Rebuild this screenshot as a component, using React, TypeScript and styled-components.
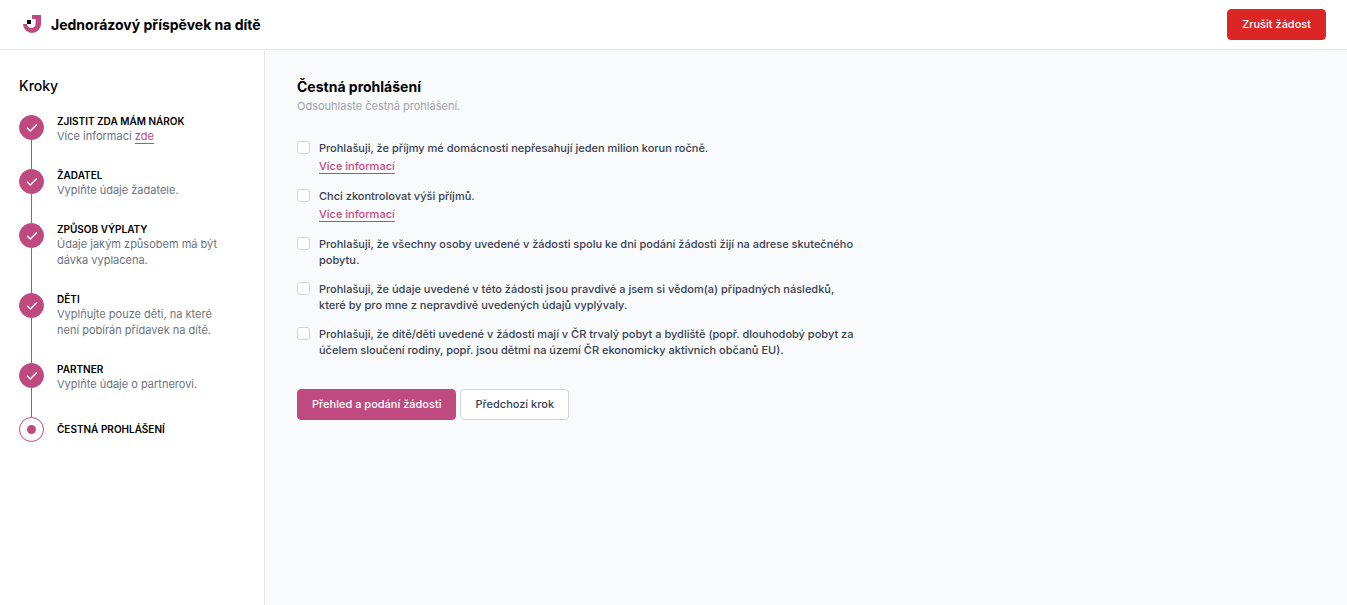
import React from "react";
import styled, { createGlobalStyle, css } from "styled-components";

const colors = {
  brand: "#be4a7f",
  danger: "#dc2626",
  border: "#e5e7eb",
  inputBorder: "#d1d5db",
  canvas: "#f9fafc",
  text: "#374151",
  muted: "#6b7280",
  faint: "#9ca3af",
};

const GlobalStyle = createGlobalStyle`
  *, *::before, *::after { box-sizing: border-box; }
  body {
    margin: 0;
    background: ${colors.canvas};
    color: #000;
    font-family: Inter, "Liberation Sans", sans-serif;
    font-size: 11px;
    line-height: 16px;
  }
  h1, h2, h3, p, ol, ul { margin: 0; padding: 0; }
  ol, ul { list-style: none; }
`;

const Page = styled.div`
  display: flex;
  flex-direction: column;
  min-height: 100vh;
`;

const Header = styled.header`
  display: flex;
  align-items: center;
  justify-content: space-between;
  height: 50px;
  padding: 0 21px 1px 22px;
  background: #fff;
  border-bottom: 1px solid ${colors.border};
`;

const Brand = styled.div`
  display: flex;
  align-items: center;
  gap: 9px;
`;

const AppTitle = styled.h1`
  padding-top: 2px;
  font-size: 14px;
  line-height: 20px;
  font-weight: 700;
`;

const Body = styled.div`
  display: flex;
  flex: 1;
`;

const Sidebar = styled.nav`
  flex: 0 0 265px;
  padding: 26px 32px 26px 19px;
  background: #fff;
  border-right: 1px solid ${colors.border};
`;

const SidebarTitle = styled.h2`
  font-size: 14px;
  line-height: 20px;
  font-weight: 500;
`;

const StepList = styled.ol`
  padding-top: 19px;
`;

const StepItem = styled.li`
  display: flex;
  gap: 13px;
`;

const StepRail = styled.div`
  display: flex;
  flex-direction: column;
  align-items: center;
  flex: 0 0 25px;
`;

const StepMarker = styled.span<{ $current?: boolean }>`
  display: flex;
  align-items: center;
  justify-content: center;
  width: 25px;
  height: 25px;
  flex: none;
  border: 1px solid ${colors.brand};
  border-radius: 50%;
  background: ${(p) => (p.$current ? "#fff" : colors.brand)};
`;

const CurrentDot = styled.span`
  width: 9px;
  height: 9px;
  border-radius: 50%;
  background: ${colors.brand};
`;

const StepLine = styled.span`
  width: 1px;
  flex: 1;
  background: ${colors.brand};
`;

const StepText = styled.div<{ $current?: boolean }>`
  padding-bottom: ${(p) => (p.$current ? 0 : 25)}px;
  align-self: ${(p) => (p.$current ? "center" : "flex-start")};
`;

const StepTitle = styled.h3`
  font-size: 10px;
  line-height: 13px;
  font-weight: 600;
  text-transform: uppercase;
`;

const StepDescription = styled.p`
  color: ${colors.muted};
`;

const TextLink = styled.a`
  color: ${colors.brand};
  border-bottom: 1px solid ${colors.brand};
  text-decoration: none;
`;

const Main = styled.main`
  flex: 1;
  min-width: 0;
  padding: 26px 32px;
`;

const PageTitle = styled.h2`
  font-size: 14px;
  line-height: 22px;
  font-weight: 700;
`;

const PageLead = styled.p`
  color: ${colors.faint};
`;

const Form = styled.form`
  max-width: 560px;
  padding-top: 26px;
`;

const Declarations = styled.ul`
  display: flex;
  flex-direction: column;
  gap: 13px;
`;

const Declaration = styled.li`
  display: flex;
  align-items: flex-start;
  gap: 9px;
  color: ${colors.text};
`;

const Checkbox = styled.input`
  appearance: none;
  flex: none;
  width: 13px;
  height: 13px;
  margin: 1px 0 0;
  background: #fff;
  border: 1px solid ${colors.inputBorder};
  border-radius: 3px;

  &:checked {
    background: ${colors.brand};
    border-color: ${colors.brand};
  }
`;

const DeclarationLabel = styled.label`
  display: block;
  font-weight: 500;
`;

const MoreInfo = styled.p`
  padding: 2px 0 1px;
  font-weight: 500;
`;

const Actions = styled.div`
  display: flex;
  gap: 4px;
  padding-top: 31px;
`;

const variants = {
  primary: css`
    background: ${colors.brand};
    border-color: ${colors.brand};
    color: #fff;
  `,
  secondary: css`
    background: #fff;
    border-color: ${colors.inputBorder};
    color: ${colors.text};
  `,
  danger: css`
    background: ${colors.danger};
    border-color: ${colors.danger};
    color: #fff;
  `,
};

const Button = styled.button<{ $variant: keyof typeof variants }>`
  padding: 6px 14px;
  border: 1px solid;
  border-radius: 4px;
  font: 500 11px/17px Inter, "Liberation Sans", sans-serif;
  white-space: nowrap;
  cursor: pointer;
  ${(p) => variants[p.$variant]}
`;

const Logo = () => (
  <svg width="20" height="20" viewBox="0 0 20 20" aria-hidden="true">
    <path
      d="M10 1h9v9a9 9 0 0 1-18 0h4a4.300 4 0 0 0 8.600 0V5H10z"
      fill={colors.brand}
    />
    <rect x="5" y="6" width="4" height="4" fill="#000" />
  </svg>
);

const Check = () => (
  <svg width="12" height="10" viewBox="0 0 12 10" aria-hidden="true">
    <path
      d="M1.500 5.300 4.300 8 10.500 1.800"
      fill="none"
      stroke="#fff"
      strokeWidth="1.400"
      strokeLinecap="round"
      strokeLinejoin="round"
    />
  </svg>
);

interface Step {
  title: string;
  description?: React.ReactNode;
}

const steps: Step[] = [
  {
    title: "Zjistit zda mám nárok",
    description: (
      <>
        Více informací <TextLink href="#narok">zde</TextLink>
      </>
    ),
  },
  { title: "Žadatel", description: "Vyplňte údaje žadatele." },
  {
    title: "Způsob výplaty",
    description: "Údaje jakým způsobem má být dávka vyplacena.",
  },
  {
    title: "Děti",
    description: "Vyplňujte pouze děti, na které není pobírán přídavek na dítě.",
  },
  { title: "Partner", description: "Vyplňte údaje o partnerovi." },
  { title: "Čestná prohlášení" },
];

const declarations = [
  {
    id: "income",
    text: "Prohlašuji, že příjmy mé domácnosti nepřesahují jeden milion korun ročně.",
    info: true,
  },
  { id: "check-income", text: "Chci zkontrolovat výši příjmů.", info: true },
  {
    id: "address",
    text: "Prohlašuji, že všechny osoby uvedené v žádosti spolu ke dni podání žádosti žijí na adrese skutečného pobytu.",
  },
  {
    id: "truth",
    text: "Prohlašuji, že údaje uvedené v této žádosti jsou pravdivé a jsem si vědom(a) případných následků, které by pro mne z nepravdivě uvedených údajů vyplývaly.",
  },
  {
    id: "residence",
    text: "Prohlašuji, že dítě/děti uvedené v žádosti mají v ČR trvalý pobyt a bydliště (popř. dlouhodobý pobyt za účelem sloučení rodiny, popř. jsou dětmi na území ČR ekonomicky aktivních občanů EU).",
  },
];

export default function App() {
  return (
    <Page>
      <GlobalStyle />
      <Header>
        <Brand>
          <Logo />
          <AppTitle>Jednorázový příspěvek na dítě</AppTitle>
        </Brand>
        <Button type="button" $variant="danger">
          Zrušit žádost
        </Button>
      </Header>
      <Body>
        <Sidebar aria-label="Kroky">
          <SidebarTitle>Kroky</SidebarTitle>
          <StepList>
            {steps.map((step, index) => {
              const current = index === steps.length - 1;
              return (
                <StepItem key={step.title} aria-current={current ? "step" : undefined}>
                  <StepRail>
                    <StepMarker $current={current}>
                      {current ? <CurrentDot /> : <Check />}
                    </StepMarker>
                    {!current && <StepLine />}
                  </StepRail>
                  <StepText $current={current}>
                    <StepTitle>{step.title}</StepTitle>
                    {step.description && (
                      <StepDescription>{step.description}</StepDescription>
                    )}
                  </StepText>
                </StepItem>
              );
            })}
          </StepList>
        </Sidebar>
        <Main>
          <PageTitle>Čestná prohlášení</PageTitle>
          <PageLead>Odsouhlaste čestná prohlášení.</PageLead>
          <Form onSubmit={(event) => event.preventDefault()}>
            <Declarations>
              {declarations.map((item) => (
                <Declaration key={item.id}>
                  <Checkbox type="checkbox" id={item.id} />
                  <div>
                    <DeclarationLabel htmlFor={item.id}>{item.text}</DeclarationLabel>
                    {item.info && (
                      <MoreInfo>
                        <TextLink href={`#${item.id}`}>Více informací</TextLink>
                      </MoreInfo>
                    )}
                  </div>
                </Declaration>
              ))}
            </Declarations>
            <Actions>
              <Button type="submit" $variant="primary">
                Přehled a podání žádosti
              </Button>
              <Button type="button" $variant="secondary">
                Předchozí krok
              </Button>
            </Actions>
          </Form>
        </Main>
      </Body>
    </Page>
  );
}
